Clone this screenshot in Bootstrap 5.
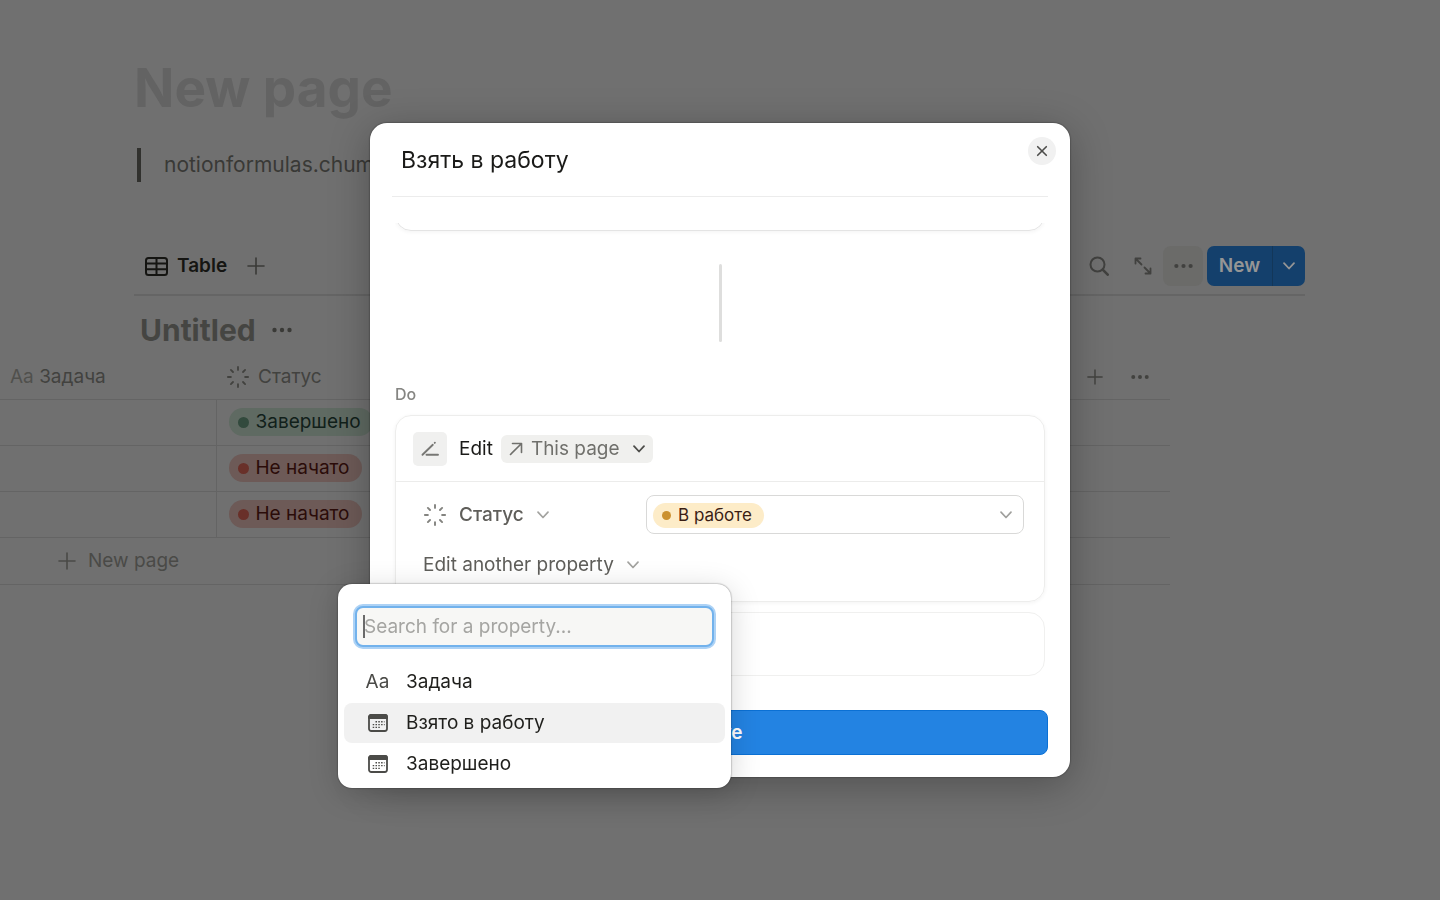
<!DOCTYPE html>
<html lang="en">
<head>
<meta charset="utf-8">
<meta name="viewport" content="width=device-width, initial-scale=1">
<title>New page</title>
<link href="https://cdn.jsdelivr.net/npm/bootstrap@5.3.0/dist/css/bootstrap.min.css" rel="stylesheet">
<style>
  body { font-family: Inter, "Liberation Sans", sans-serif; font-size: 19px; line-height: 24px; background: #707070; color: #3a3a37; min-height: 100vh; overflow: hidden; }
  button { font: inherit; color: inherit; }
  svg { display: block; flex: none; fill: none; stroke: currentColor; stroke-linecap: round; stroke-linejoin: round; }
  .plain { background: none; border: 0; padding: 0; display: flex; align-items: center; justify-content: center; }

  /* page behind the dialog */
  .page-head { padding: 56px 135px 0 134px; }
  .page-title { font-size: 53px; line-height: 64px; font-weight: 700; color: #636363; margin: 0 0 28px; }
  .quote { border-left: 4px solid #31312e; padding: 5px 0 5px 23px; margin: 0 3px; font-size: 22px; line-height: 24px; color: #393936; }
  .quote { font-size: 21px; }
  .view-bar { margin-top: 56px; padding: 8px 0; border-bottom: 2px solid #656565; }
  .view-tab { color: #151512; font-weight: 600; gap: 9px; margin-left: 11px; }
  .tool-icon { width: 40px; height: 40px; color: #41413f; }
  .tool-more { background: #6b6b69; border-radius: 8px; }
  .new-group > button { background: #14406c; color: #959595; border: 0; height: 40px; font-weight: 600; }
  .new-main { width: 65px; border-radius: 7px 0 0 7px; padding: 0; }
  .new-more { width: 33px; border-radius: 0 7px 7px 0; border-left: 1px solid #133759 !important; }
  .db-title { font-size: 30px; line-height: 36px; font-weight: 700; color: #454542; margin: 0 0 0 2px; }
  .db-wrap { padding-right: 270px; }
  .db-table { width: 100%; table-layout: fixed; border-collapse: collapse; margin-top: 5px; }
  .db-table th { height: 46px; font-weight: 400; color: #42423f; padding: 2px 10px 0; }
  .db-table td { height: 46px; padding: 0 12px; border-top: 1px solid #646464; border-bottom: 1px solid #646464; }
  .db-table td + td { border-left: 1px solid #646464; }
  .db-table .foot-row td { height: 47px; color: #4a4a47; padding-left: 58px; }
  .type-aa { color: #50504d; }
  .status-pill { display: inline-flex; align-items: center; gap: 7px; height: 28px; border-radius: 14px; padding: 0 12px 0 9px; vertical-align: middle; white-space: nowrap; }
  .status-pill::before { content: ""; width: 11px; height: 11px; border-radius: 50%; background: var(--dot); }
  .pill-done { background: #5f6a62; color: #11201a; --dot: #324a3d; }
  .pill-todo { background: #6d5a57; color: #2b0c09; --dot: #693029; }
  .pill-work { background: #fdecc8; color: #3a1d14; --dot: #cb912f; height: 25px; font-size: 17px; padding: 0 12px 0 9px; }
  .pill-work::before { width: 9px; height: 9px; }

  /* dialog */
  .auto-dialog { max-width: 700px; }
  .auto-content { border: 0; border-radius: 17px; padding: 0 22px 22px; color: #1a1a18; box-shadow: 0 0 2px rgba(0,0,0,.6), 0 8px 40px rgba(0,0,0,.28); }
  .auto-head { height: 74px; padding: 0 9px; border-bottom: 1px solid #ececec; }
  .auto-name { font-size: 23px; line-height: 30px; font-weight: 400; margin: 0; }
  .close-btn { position: absolute; top: 14px; right: 14px; width: 28px; height: 28px; border-radius: 50%; background: #f1f1f1; color: #4c4c4a; }
  .auto-body { padding: 26px 3px 34px; }
  .scroll-edge { height: 18px; overflow: hidden; display: flex; align-items: flex-start; flex-direction: column; }
  .step-card { border: 1px solid #ededec; border-radius: 16px; box-shadow: 0 1px 4px rgba(0,0,0,.05); }
  .scroll-edge .step-card { width: 100%; height: 48px; margin-top: -40px; flex: none; border-color: #e4e4e4; }
  .step-line { width: 3px; height: 78px; background: #dededd; border-radius: 2px; margin: 23px auto 42px; }
  .do-label { font-size: 16px; line-height: 20px; font-weight: 500; color: #858582; margin-bottom: 11px; }
  .step-head { padding: 14px 17px; height: 66px; border-bottom: 1px solid #ececeb; }
  .step-icon { width: 34px; height: 34px; border-radius: 5px; background: #f0f0ef; color: #777774; }
  .page-pick { background: #f0f0ee; color: #70706c; border-radius: 6px; height: 28px; padding: 0 7px 0 8px; gap: 8px; }
  .pick-chev { color: #4c4c49; }
  .step-rows { padding: 13px 20px 0 27px; height: 119px; color: #5f5e5a; }
  .spin-icon { color: #83837f; }
  .value-box { width: 378px; height: 39px; border: 1px solid #d9d9d8; border-radius: 8px; background: #fff; padding: 1px 10px 0 6px; color: #a0a09d; }
  .muted-chev { color: #a3a3a0; }
  .more-row { position: relative; margin-top: 19px; }
  .add-card { height: 64px; margin-top: 10px; border: 1px solid #f0f0ef; border-radius: 16px; }
  .save-btn { height: 45px; width: 100%; border: 1px solid #0b70d4; border-radius: 8px; background: #2383e2; color: #fff; font-weight: 600; padding: 0; }

  /* property menu */
  .prop-menu { position: absolute; top: 31px; left: -85px; width: 393px; z-index: 5; background: #fff; border-radius: 14px; padding: 22px 6px 4px; box-shadow: 0 0 2px rgba(0,0,0,.55), 0 6px 30px rgba(0,0,0,.17); color: #1f1f1c; }
  .search-wrap { position: relative; margin: 0 11px 15px; }
  .search-box { display: block; width: 100%; height: 41px; border: 2px solid #72b2ec; box-shadow: 0 0 0 2px #add2f5; border-radius: 8px; background: #f7f7f5; padding: 0 7px; outline: 0; }
  .search-box::placeholder { color: #a5a5a2; opacity: 1; }
  .text-caret { position: absolute; left: 8px; top: 9px; width: 2px; height: 23px; background: #6a6a6a; }
  .prop-list { display: grid; row-gap: 1px; }
  .prop-item { width: 100%; height: 40px; border-radius: 8px; border: 0; background: none; text-align: left; padding: 0 22px; display: flex; align-items: center; gap: 17px; }
  .prop-item.hovered { background: #f1f1f1; }
  .prop-icon { width: 23px; flex: none; color: #4b4b48; display: flex; justify-content: center; }
</style>
</head>
<body>
<svg width="0" height="0" class="position-absolute" aria-hidden="true">
  <symbol id="plus" viewBox="0 0 18 18"><path d="M9 1v16M1 9h16"/></symbol>
  <symbol id="dots" viewBox="0 0 20 6"><g fill="currentColor" stroke="none"><circle cx="2.500" cy="3" r="2.200"/><circle cx="10" cy="3" r="2.200"/><circle cx="17.500" cy="3" r="2.200"/></g></symbol>
  <symbol id="chev" viewBox="0 0 14 10"><path d="M2 2.200 7 7.500 12 2.200"/></symbol>
  <symbol id="spin" viewBox="0 0 24 24"><path d="M12 1.900v3M12 19.100v3M1.900 12h3M19.100 12h3M4.900 4.900l2.100 2.100M17 17l2.100 2.100M4.900 19.100 7 17M17 7l2.100-2.100"/></symbol>
  <symbol id="cal" viewBox="0 0 20 18"><rect x="1" y="1" width="18" height="16" rx="2.200"/><path d="M1 4V3a2 2 0 0 1 2-2h14a2 2 0 0 1 2 2v1z" fill="currentColor"/><path d="M7.500 7.800h9M4.700 10.600h12M4.700 13.400h7.500" stroke-width="1.400" stroke-dasharray="1.500 1.300" stroke-linecap="butt"/></symbol>
</svg>

<main>
  <div class="page-head">
    <h1 class="page-title">New page</h1>
    <div class="quote">notionformulas.chum</div>
    <div class="view-bar d-flex align-items-center">
      <button class="plain view-tab">
        <svg width="23" height="19" viewBox="0 0 23 19" stroke-width="2"><rect x="1" y="1" width="21" height="17" rx="2.500"/><path d="M1 6.500h21M1 12.200h21M11.500 1v17"/></svg>
        Table
      </button>
      <button class="plain ms-3 ps-1" aria-label="Add view"><svg width="18" height="18" stroke-width="1.600"><use href="#plus"/></svg></button>
      <div class="ms-auto d-flex align-items-center">
        <button class="plain tool-icon" aria-label="Search"><svg width="20" height="20" viewBox="0 0 20 20" stroke-width="2"><circle cx="8.500" cy="8.500" r="7"/><path d="m13.700 13.700 5 5" stroke-width="2.600"/></svg></button>
        <button class="plain tool-icon ms-1" aria-label="Expand"><svg width="18" height="18" viewBox="0 0 18 18" stroke-width="1.800" stroke-linecap="butt"><path d="M1.500 6.500v-5h5M1.500 1.500l6 6M16.500 11.500v5h-5M16.500 16.500l-6-6"/></svg></button>
        <button class="plain tool-icon tool-more me-1" aria-label="More"><svg width="19" height="6"><use href="#dots"/></svg></button>
        <div class="new-group d-flex">
          <button class="new-main">New</button>
          <button class="new-more d-flex align-items-center justify-content-center p-0" aria-label="New options"><svg width="14" height="10" stroke-width="1.800"><use href="#chev"/></svg></button>
        </div>
      </div>
    </div>
    <div class="d-flex align-items-center pt-3 ps-1">
      <h2 class="db-title">Untitled</h2>
      <button class="plain ms-3" aria-label="Database options"><svg width="20" height="6"><use href="#dots"/></svg></button>
    </div>
  </div>

  <div class="db-wrap">
    <table class="db-table">
      <colgroup><col style="width:216px"><col style="width:216px"><col><col style="width:101px"></colgroup>
      <thead>
        <tr>
          <th scope="col"><span class="type-aa">Aa</span> Задача</th>
          <th scope="col"><div class="d-flex align-items-center gap-2"><svg width="24" height="24" stroke-width="1.800"><use href="#spin"/></svg>Статус</div></th>
          <th></th>
          <th><div class="d-flex align-items-center gap-4 ps-2"><button class="plain" aria-label="Add property"><svg width="16" height="16" stroke-width="1.600"><use href="#plus"/></svg></button><button class="plain ms-1" aria-label="Property options"><svg width="18" height="6"><use href="#dots"/></svg></button></div></th>
        </tr>
      </thead>
      <tbody>
        <tr><td></td><td colspan="3"><span class="status-pill pill-done">Завершено</span></td></tr>
        <tr><td></td><td colspan="3"><span class="status-pill pill-todo">Не начато</span></td></tr>
        <tr><td></td><td colspan="3"><span class="status-pill pill-todo">Не начато</span></td></tr>
        <tr class="foot-row"><td colspan="4"><button class="plain gap-2"><svg width="18" height="18" stroke-width="1.600"><use href="#plus"/></svg><span class="ms-1">New page</span></button></td></tr>
      </tbody>
    </table>
  </div>
</main>

<div class="modal d-block" tabindex="-1" role="dialog" aria-labelledby="dlg-name">
  <div class="modal-dialog modal-dialog-centered auto-dialog">
    <div class="modal-content auto-content">
      <div class="auto-head d-flex align-items-center">
        <h2 class="auto-name" id="dlg-name">Взять в работу</h2>
        <button class="plain close-btn" aria-label="Close"><svg width="12" height="12" viewBox="0 0 12 12" stroke-width="1.600"><path d="m1.700 1.700 8.600 8.600M10.300 1.700l-8.600 8.600"/></svg></button>
      </div>
      <div class="auto-body">
        <div class="scroll-edge"><div class="step-card"></div></div>
        <div class="step-line"></div>
        <div class="do-label">Do</div>
        <div class="step-card">
          <div class="step-head d-flex align-items-center">
            <span class="step-icon d-flex align-items-center justify-content-center"><svg width="18" height="16" viewBox="0 0 18 16" stroke-width="1.900"><path d="M13.900 1.700l-.2.200M11.800 3.800 1.500 13.800M5.500 13.800H17"/></svg></span>
            <span class="ms-2 ps-1 me-2">Edit</span>
            <button class="plain page-pick"><svg width="14" height="14" viewBox="0 0 14 14" stroke-width="1.600"><path d="M1.500 12.500 12.500 1.500M3.500 1.500h9v9"/></svg>This page<svg class="ms-1 pick-chev" width="14" height="10" stroke-width="1.800"><use href="#chev"/></svg></button>
          </div>
          <div class="step-rows">
            <div class="d-flex align-items-center justify-content-between">
              <button class="plain fw-medium"><svg class="me-2 spin-icon" width="24" height="24" stroke-width="1.900"><use href="#spin"/></svg><span class="ms-1 me-2 pe-1">Статус</span><svg class="muted-chev" width="14" height="10" stroke-width="1.700"><use href="#chev"/></svg></button>
              <button class="value-box d-flex align-items-center justify-content-between" aria-label="Статус"><span class="status-pill pill-work">В работе</span><svg width="14" height="10" stroke-width="1.700"><use href="#chev"/></svg></button>
            </div>
            <div class="more-row">
              <button class="plain">Edit another property<svg class="ms-2 ps-1 muted-chev" width="18" height="10" stroke-width="1.700"><use href="#chev"/></svg></button>
              <div class="prop-menu">
                <div class="search-wrap">
                  <input class="search-box" type="text" aria-label="Search for a property" placeholder="Search for a property...">
                  <span class="text-caret"></span>
                </div>
                <div class="prop-list">
                  <button class="prop-item"><span class="prop-icon">Aa</span>Задача</button>
                  <button class="prop-item hovered"><span class="prop-icon"><svg width="20" height="18" stroke-width="1.800"><use href="#cal"/></svg></span>Взято в работу</button>
                  <button class="prop-item"><span class="prop-icon"><svg width="20" height="18" stroke-width="1.800"><use href="#cal"/></svg></span>Завершено</button>
                </div>
              </div>
            </div>
          </div>
        </div>
        <div class="add-card"></div>
      </div>
      <button class="save-btn">Save</button>
    </div>
  </div>
</div>
<script src="https://cdn.jsdelivr.net/npm/bootstrap@5.3.0/dist/js/bootstrap.bundle.min.js"></script>
</body>
</html>
